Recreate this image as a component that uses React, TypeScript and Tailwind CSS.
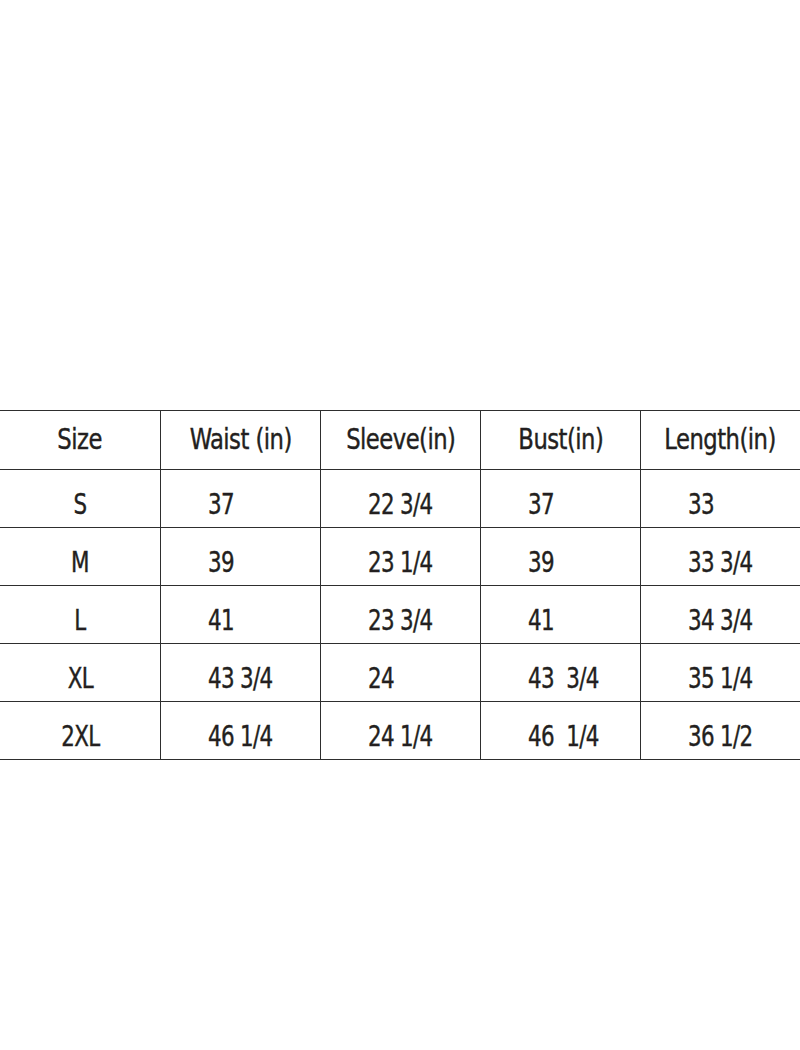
const headers = ['Size', 'Waist (in)', 'Sleeve(in)', 'Bust(in)', 'Length(in)'];

const rows = [
  ['S', '37', '22 3/4', '37', '33'],
  ['M', '39', '23 1/4', '39', '33 3/4'],
  ['L', '41', '23 3/4', '41', '34 3/4'],
  ['XL', '43 3/4', '24', '43  3/4', '35 1/4'],
  ['2XL', '46 1/4', '24 1/4', '46  1/4', '36 1/2'],
];

export default function App() {
  return (
    <div
      className="h-[1050px] w-[800px] bg-white pt-[410px] text-[#231f20] [-webkit-text-stroke:0.4px_#231f20]"
      style={{ fontFamily: '"Liberation Sans Narrow", "DejaVu Sans Condensed", "Liberation Sans", sans-serif' }}
    >
      <div className="border-t border-[#2e2e2e]">
        <div className="grid h-[59px] grid-cols-5 border-b border-[#2e2e2e]">
          {headers.map((h, i) => (
            <div
              key={h}
              className={`flex items-center justify-center text-[29px] ${i > 0 ? 'border-l border-[#2e2e2e]' : ''}`}
            >
              <span className="inline-block origin-center scale-x-[0.87] tracking-[-0.6px] whitespace-pre">{h}</span>
            </div>
          ))}
        </div>
        {rows.map((r) => (
          <div key={r[0]} className="grid h-[58px] grid-cols-5 border-b border-[#2e2e2e]">
            {r.map((c, i) => (
              <div
                key={i}
                className={
                  i === 0
                    ? 'flex items-center justify-center pt-[12px] text-[29px]'
                    : 'flex items-center border-l border-[#2e2e2e] pl-[47px] pt-[12px] text-[29px]'
                }
              >
                <span
                  className={`inline-block scale-x-[0.82] tracking-[-0.8px] whitespace-pre ${i === 0 ? 'origin-center' : 'origin-left'}`}
                >
                  {c}
                </span>
              </div>
            ))}
          </div>
        ))}
      </div>
    </div>
  );
}
